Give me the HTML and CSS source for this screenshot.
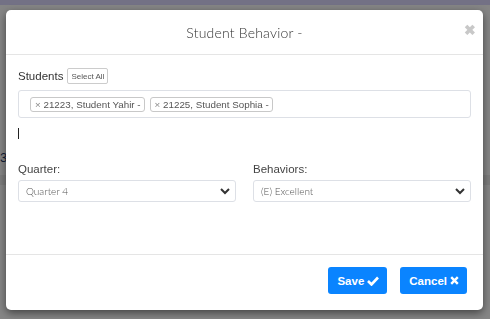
FILE: index.html
```html
<!DOCTYPE html>
<html lang="en">
<head>
    <meta charset="UTF-8">
    <title>Student Behavior</title>
    <link rel="stylesheet" href="styles.css">
</head>
<body>
    <div class="page">
        <div class="topbar"></div>
        <div class="page-row">3</div>
        <div class="page-band"></div>
    </div>

    <div class="backdrop"></div>

    <div class="modal">
        <header class="modal-header">
            <h4>Student Behavior -</h4>
            <span class="close">&#10006;</span>
        </header>

        <section class="modal-body">
            <div class="students-label">
                <span>Students</span>
                <button class="select-all">Select All</button>
            </div>
            <div class="tag-box">
                <span class="tag"><span class="tag-x">&times;</span> 21223, Student Yahir -</span>
                <span class="tag"><span class="tag-x">&times;</span> 21225, Student Sophia -</span>
            </div>
            <div class="cursor"></div>

            <div class="fields">
                <div class="field">
                    <label>Quarter:</label>
                    <div class="select">
                        <span>Quarter 4</span>
                        <svg width="10" height="7" viewBox="0 0 10 7"><path d="M1 1 L5 5 L9 1" fill="none" stroke="#333" stroke-width="2"/></svg>
                    </div>
                </div>
                <div class="field">
                    <label>Behaviors:</label>
                    <div class="select">
                        <span>(E) Excellent</span>
                        <svg width="10" height="7" viewBox="0 0 10 7"><path d="M1 1 L5 5 L9 1" fill="none" stroke="#333" stroke-width="2"/></svg>
                    </div>
                </div>
            </div>
        </section>

        <footer class="modal-footer">
            <button class="btn">Save <svg width="12" height="10" viewBox="0 0 12 10"><path d="M1 5 L4.5 8.5 L11 1.5" fill="none" stroke="#fff" stroke-width="2.6"/></svg></button>
            <button class="btn">Cancel <svg width="9" height="9" viewBox="0 0 9 9"><path d="M1.2 1.2 L7.8 7.8 M7.8 1.2 L1.2 7.8" stroke="#fff" stroke-width="2.4"/></svg></button>
        </footer>
    </div>
</body>
</html>
```

FILE: styles.css
```css
body {
    margin: 0;
    padding: 0;
    font-family: "Liberation Sans", Arial, sans-serif;
    background-color: #fff;
    width: 490px;
    height: 319px;
    overflow: hidden;
}
.page {
    height: 319px;
}
.topbar {
    height: 5px;
    background-color: #dcd8ff;
}
.page-row {
    padding: 145px 0 0 0;
    font-size: 13px;
    color: #1f3a6a;
}
.page-band {
    margin-top: 10px;
    height: 10px;
    background-color: #eeeeee;
}
.backdrop {
    position: fixed;
    top: 0;
    left: 0;
    right: 0;
    bottom: 0;
    background-color: rgba(0, 0, 0, 0.48);
}
.modal {
    position: fixed;
    top: 10px;
    left: 6px;
    width: 477px;
    height: 300px;
    background-color: #fff;
    border-radius: 5px;
    box-shadow: 0 3px 9px rgba(0, 0, 0, 0.5);
    display: flex;
    flex-direction: column;
}
.modal-header {
    height: 44px;
    border-bottom: 1px solid #e5e5e5;
    display: flex;
    align-items: center;
    justify-content: center;
    position: relative;
}
.modal-header h4 {
    margin: 0;
    font-family: Lato, sans-serif;
    font-weight: 300;
    font-size: 14px;
    color: #333;
    letter-spacing: 0.2px;
}
.close {
    position: absolute;
    right: 7px;
    top: 12px;
    font-size: 14px;
    color: #c8c8c8;
    font-weight: bold;
}
.modal-body {
    flex: 1;
    padding: 12px 12px 0 12px;
}
.students-label {
    display: flex;
    align-items: center;
    gap: 4px;
    font-size: 11.5px;
    color: #333;
    height: 18px;
}
.select-all {
    font-family: "Liberation Sans", Arial, sans-serif;
    font-size: 8px;
    color: #555;
    background-color: #fff;
    border: 1px solid #ccc;
    border-radius: 2px;
    height: 16px;
    padding: 0 3px;
}
.tag-box {
    margin-top: 5px;
    height: 26px;
    border: 1px solid #dde0e6;
    border-radius: 3px;
    padding: 0 0 0 11px;
    display: flex;
    align-items: center;
    gap: 5px;
}
.tag {
    font-size: 9.8px;
    color: #555;
    border: 1px solid #c8c8c8;
    border-radius: 3px;
    padding: 0 3px 0 4px;
    height: 13px;
    line-height: 13px;
}
.tag-x {
    color: #888;
}
.cursor {
    margin-top: 10px;
    width: 1px;
    height: 11px;
    background-color: #222;
}
.fields {
    margin-top: 24px;
    display: flex;
    gap: 17px;
}
.field {
    flex: 1;
}
.field label {
    display: block;
    font-size: 11.5px;
    color: #444;
    height: 16px;
}
.select {
    margin-top: 1px;
    height: 20px;
    border: 1px solid #dde0e6;
    border-radius: 3px;
    display: flex;
    align-items: center;
    justify-content: space-between;
    padding: 0 5px 0 7px;
    font-family: Lato, sans-serif;
    font-weight: 300;
    font-size: 10px;
    color: #555;
}
.modal-footer {
    height: 56px;
    border-top: 1px solid #e5e5e5;
    display: flex;
    justify-content: flex-end;
    align-items: flex-start;
    gap: 13px;
    padding: 12px 16px 0 0;
    box-sizing: border-box;
}
.btn {
    font-family: "Liberation Sans", Arial, sans-serif;
    font-weight: bold;
    font-size: 11.5px;
    color: #fff;
    background-color: #0a84ff;
    border: none;
    border-radius: 3px;
    height: 27px;
    padding: 0 8px 0 9px;
    display: flex;
    align-items: center;
    gap: 3px;
}
```
